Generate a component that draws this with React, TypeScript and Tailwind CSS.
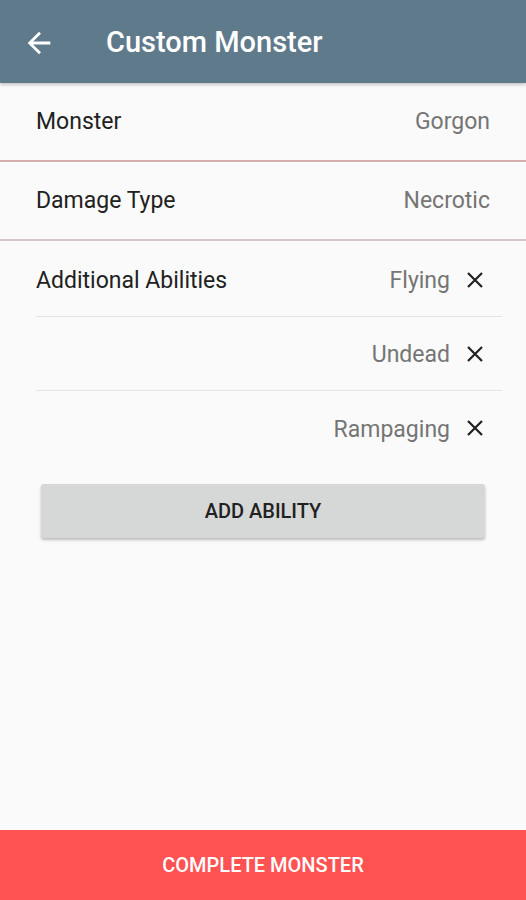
const abilities = ["Flying", "Undead", "Rampaging"];

const CloseIcon = () => (
  <svg width="20" height="20" viewBox="0 0 20 20" className="text-[#212121]">
    <path d="M3 3L17 17M17 3L3 17" stroke="currentColor" strokeWidth="2.2" fill="none" />
  </svg>
);

export default function App() {
  return (
    <div className="flex h-[900px] w-[526px] flex-col bg-[#fafafa] font-['Roboto',sans-serif]">
      {/* TOOLBAR */}
      <div className="flex h-[83px] shrink-0 items-center bg-[#5f7a8b] pt-[2px] shadow-[0_2px_3px_rgba(0,0,0,0.2)]">
        <svg width="34" height="34" viewBox="0 0 24 24" className="ml-[22px] text-white">
          <path d="M20 11H7.83l5.59-5.59L12 4l-8 8 8 8 1.41-1.41L7.83 13H20v-2z" fill="currentColor" />
        </svg>
        <h1 className="ml-[50px] text-[29px] font-medium text-white">Custom Monster</h1>
      </div>

      {/* FIELDS */}
      <div className="flex h-[79px] items-center justify-between border-b-2 border-[#d3aeae] px-9 pt-[2px]">
        <span className="text-[23px] text-[#212121]">Monster</span>
        <span className="text-[23px] text-[#757575]">Gorgon</span>
      </div>
      <div className="flex h-[79px] items-center justify-between border-b-2 border-[#d8c6c6] px-9 pt-[2px]">
        <span className="text-[23px] text-[#212121]">Damage Type</span>
        <span className="text-[23px] text-[#757575]">Necrotic</span>
      </div>

      {/* ABILITIES */}
      <div className="ml-9 mr-6 mt-[2px] flex flex-col">
        {abilities.map((a, i) => (
          <div
            key={a}
            className={
              "flex h-[74px] items-center pt-[4px] " +
              (i < abilities.length - 1 ? "border-b border-[#e4e4e4]" : "")
            }
          >
            <span className="flex-1 text-[23px] text-[#212121]">{i === 0 ? "Additional Abilities" : ""}</span>
            <span className="text-[23px] text-[#757575]">{a}</span>
            <span className="mb-[4px] ml-[15px] mr-[17px] flex items-center">
              <CloseIcon />
            </span>
          </div>
        ))}
      </div>

      <div className="px-[41px] pt-[19px]">
        <button className="h-[54px] w-full rounded-[3px] bg-[#d6d7d7] text-[20px] font-medium text-[#212121] shadow-[0_2px_3px_rgba(0,0,0,0.25)]">
          ADD ABILITY
        </button>
      </div>

      <div className="flex-1" />

      {/* FOOTER */}
      <button className="h-[70px] w-full shrink-0 bg-[#ff5252] text-[20px] font-medium text-white">
        COMPLETE MONSTER
      </button>
    </div>
  );
}
